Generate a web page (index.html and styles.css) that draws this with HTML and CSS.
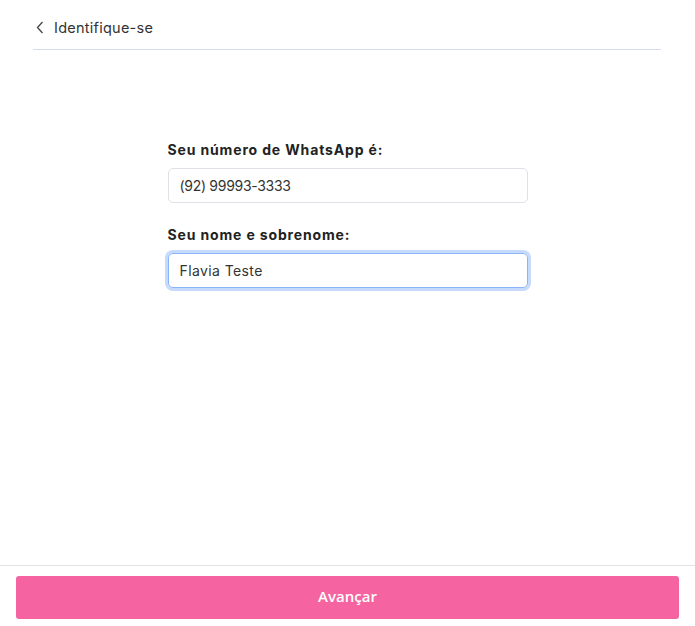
FILE: index.html
```html
<!DOCTYPE html>
<html lang="pt-BR">
<head>
<meta charset="utf-8">
<link rel="stylesheet" href="styles.css">
</head>
<body>
<div class="page">
  <header class="header">
    <svg class="back" width="8" height="13" viewBox="0 0 8 13"><path d="M6.5 1 L1.5 6.5 L6.5 12" fill="none" stroke="#444" stroke-width="1.3"/></svg>
    <span class="title">Identifique-se</span>
  </header>
  <main class="main">
    <form class="form">
      <label class="label">Seu número de WhatsApp é:</label>
      <div class="input phone">(92) 99993-3333</div>
      <label class="label label-2">Seu nome e sobrenome:</label>
      <div class="input focused">Flavia Teste</div>
    </form>
  </main>
  <footer class="footer">
    <div class="button">Avançar</div>
  </footer>
</div>
</body>
</html>
```
FILE: styles.css
```css
html, body { margin: 0; padding: 0; background: #fff; }
body { font-family: Inter, "Noto Sans", sans-serif; color: #2b2b38; }
.page { height: 626px; display: flex; flex-direction: column; }
.header {
  margin: 0 34px 0 33px;
  height: 50px;
  border-bottom: 1px solid #d3ddec;
  display: flex; align-items: center;
  box-sizing: border-box;
  padding: 5px 0 0 3px;
}
.back { display: block; margin-right: 10px; }
.title { font-size: 14.5px; color: #333; letter-spacing: 0.25px; }
.main { flex: 1; display: flex; justify-content: center; padding-top: 91px; }
.form { width: 360px; display: flex; flex-direction: column; }
.label { font-size: 14px; font-weight: 700; color: #222; line-height: 17px; margin-bottom: 10px; letter-spacing: 0.85px; }
.label-2 { margin-top: 23px; }
.input {
  height: 35px; box-sizing: border-box;
  border: 1px solid #dfe1e6; border-radius: 5px;
  padding: 0 11px; display: flex; align-items: center;
  font-size: 14px; color: #333;
}
.phone { letter-spacing: -0.3px; }
.focused { border-color: #8ab4f8; box-shadow: 0 0 0 3px #c5dafc; letter-spacing: 0.4px; }
.footer { border-top: 1px solid #e2e2e2; padding: 10px 16px 7px; }
.button {
  height: 43px; background: #f564a0; border-radius: 3px;
  display: flex; align-items: center; justify-content: center;
  box-sizing: border-box; padding-bottom: 3px;
  color: #fff; font-family: "Open Sans", sans-serif; font-size: 15px; font-weight: 600;
}
```
